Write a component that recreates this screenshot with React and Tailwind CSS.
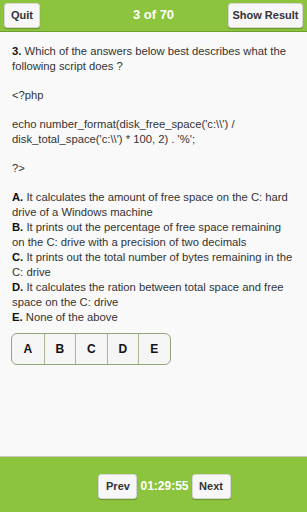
import React from "react";

const answers = [
  ["A.", "It calculates the amount of free space on the C: hard drive of a Windows machine"],
  ["B.", "It prints out the percentage of free space remaining on the C: drive with a precision of two decimals"],
  ["C.", "It prints out the total number of bytes remaining in the C: drive"],
  ["D.", "It calculates the ration between total space and free space on the C: drive"],
  ["E.", "None of the above"],
];

const btn =
  "h-[25px] rounded-[3px] bg-[#f7f7f7] border border-[#d6d6d6] shadow-[0_1px_1px_rgba(0,0,0,0.25)] text-[11px] font-bold text-[#333]";

export default function App() {
  return (
    <div className="w-[307px] h-[512px] flex flex-col bg-[#f9f9f9] font-['Liberation_Sans',Arial,sans-serif] overflow-hidden">
      {/* header */}
      <div className="h-[32px] shrink-0 bg-[#8cc43e] border-b border-[#6f9f2e] grid grid-cols-[1fr_auto_1fr] items-center px-[4px] pb-[1px]">
        <button className={btn + " w-[36px] justify-self-start"}>Quit</button>
        <div className="text-white font-bold text-[13px]">3 of 70</div>
        <button className={btn + " w-[75px] justify-self-end"}>Show Result</button>
      </div>

      {/* question */}
      <div className="flex-1 px-[12px] pt-[12px] text-[11.25px] leading-[15px] text-[#333]">
        <p>
          <b className="text-[#111]">3.</b> Which of the answers below best describes what the following script does ?
        </p>
        <p className="mt-[14px]">&lt;?php</p>
        <p className="mt-[14px]">echo number_format(disk_free_space('c:\\') / disk_total_space('c:\\') * 100, 2) . '%';</p>
        <p className="mt-[14px]">?&gt;</p>
        <div className="mt-[14px]">
          {answers.map(([k, t]) => (
            <p key={k}>
              <b className="text-[#111]">{k}</b> {t}
            </p>
          ))}
        </div>
        <div className="mt-[8px] ml-[-1px] inline-flex h-[32px] border border-[#93a57a] rounded-[6px] overflow-hidden bg-[#f5f5f5]">
          {["A", "B", "C", "D", "E"].map((l, i) => (
            <button
              key={l}
              className={
                "w-[31.5px] h-full text-[12px] font-bold text-[#111] " +
                (i > 0 ? "border-l border-[#a9b693]" : "")
              }
            >
              {l}
            </button>
          ))}
        </div>
      </div>

      {/* footer */}
      <div className="h-[56px] shrink-0 bg-[#8cc43e] border-t border-[#c8c8c8] flex justify-center items-start pt-[17px] pl-[22px] gap-[3px]">
        <button className={btn + " w-[39px]"}>Prev</button>
        <div className="h-[25px] flex items-center text-white font-bold text-[12px] pb-[2px]">01:29:55</div>
        <button className={btn + " w-[39px]"}>Next</button>
      </div>
    </div>
  );
}
